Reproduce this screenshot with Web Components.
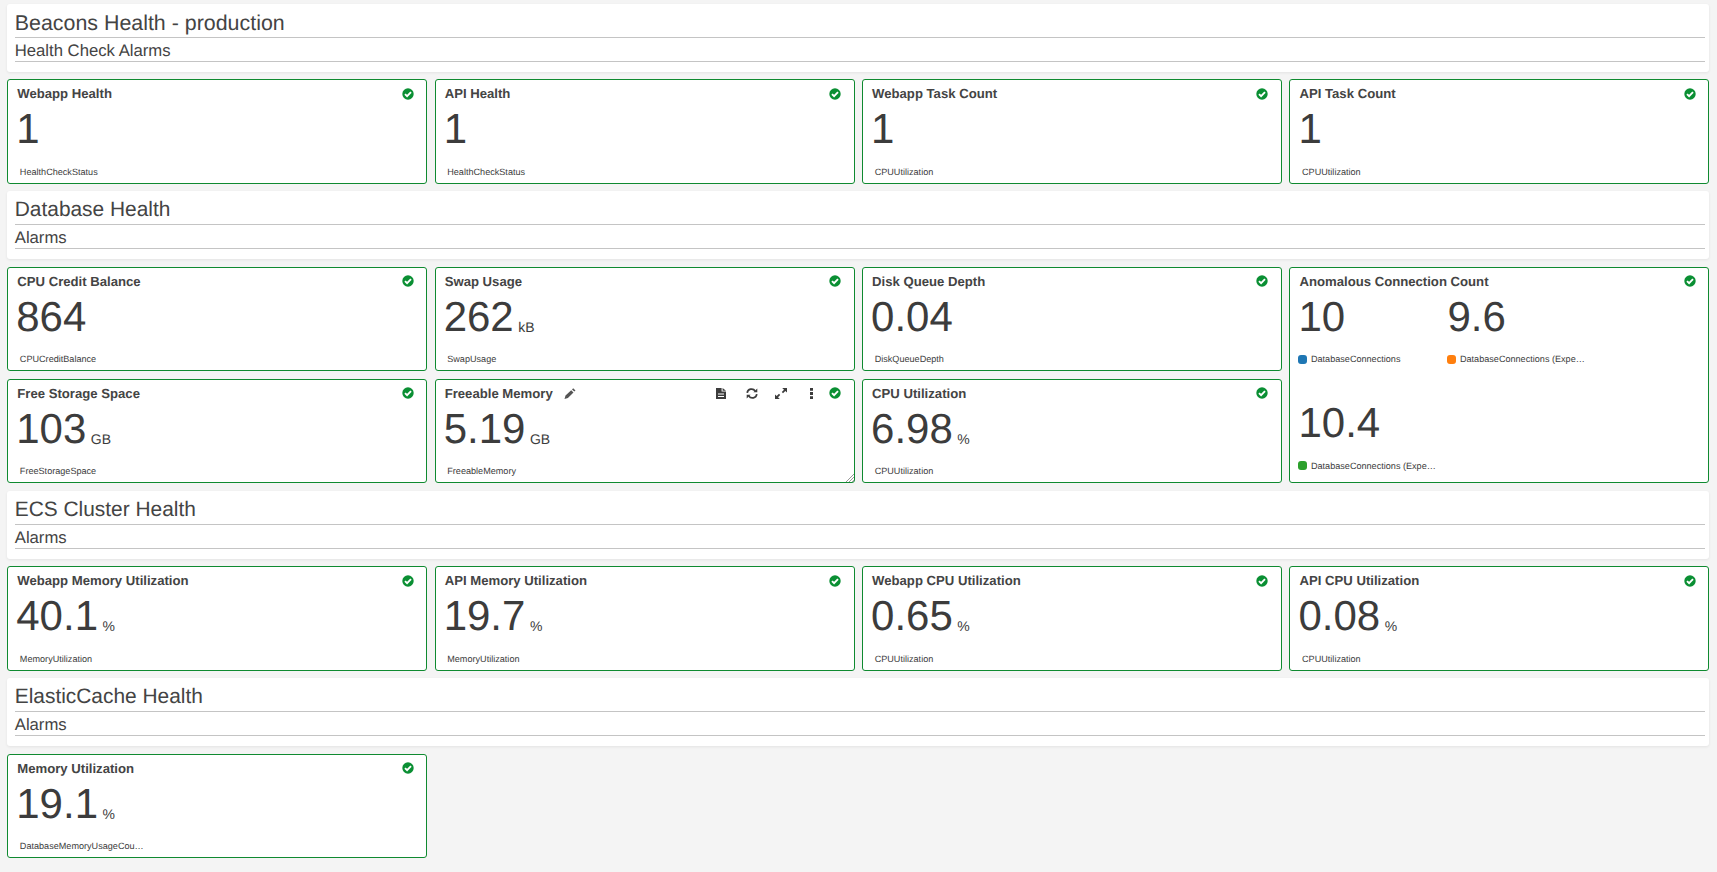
<!DOCTYPE html>
<html>
<head>
<meta charset="utf-8">
<title>Beacons Health - production</title>
<style>
    html, body { margin: 0; height: 100%; }
    body {
        background: #f4f4f4;
        color: #3c3c3c;
        font-family: "Liberation Sans", Arial, sans-serif;
        text-rendering: geometricPrecision;
    }
</style>
</head>
<body>
<health-dashboard>
    <text-panel main heading="Beacons Health - production" sub="Health Check Alarms"></text-panel>
    <metric-grid>
        <metric-card name="Webapp Health"><metric-value value="1" label="HealthCheckStatus"></metric-value></metric-card>
        <metric-card name="API Health"><metric-value value="1" label="HealthCheckStatus"></metric-value></metric-card>
        <metric-card name="Webapp Task Count"><metric-value value="1" label="CPUUtilization"></metric-value></metric-card>
        <metric-card name="API Task Count"><metric-value value="1" label="CPUUtilization"></metric-value></metric-card>
    </metric-grid>

    <text-panel heading="Database Health" sub="Alarms"></text-panel>
    <metric-grid>
        <metric-card name="CPU Credit Balance"><metric-value value="864" label="CPUCreditBalance"></metric-value></metric-card>
        <metric-card name="Swap Usage"><metric-value value="262" unit="kB" label="SwapUsage"></metric-value></metric-card>
        <metric-card name="Disk Queue Depth"><metric-value value="0.04" label="DiskQueueDepth"></metric-value></metric-card>
        <metric-card name="Anomalous Connection Count" tall>
            <metric-value value="10" label="DatabaseConnections" swatch="#1f77b4"></metric-value>
            <metric-value value="9.6" label="DatabaseConnections (Expe…" swatch="#ff7f0e"></metric-value>
            <metric-value value="10.4" label="DatabaseConnections (Expe…" swatch="#2ca02c"></metric-value>
        </metric-card>
        <metric-card name="Free Storage Space"><metric-value value="103" unit="GB" label="FreeStorageSpace"></metric-value></metric-card>
        <metric-card name="Freeable Memory" hovered><metric-value value="5.19" unit="GB" label="FreeableMemory"></metric-value></metric-card>
        <metric-card name="CPU Utilization"><metric-value value="6.98" unit="%" label="CPUUtilization"></metric-value></metric-card>
    </metric-grid>

    <text-panel heading="ECS Cluster Health" sub="Alarms"></text-panel>
    <metric-grid>
        <metric-card name="Webapp Memory Utilization"><metric-value value="40.1" unit="%" label="MemoryUtilization"></metric-value></metric-card>
        <metric-card name="API Memory Utilization"><metric-value value="19.7" unit="%" label="MemoryUtilization"></metric-value></metric-card>
        <metric-card name="Webapp CPU Utilization"><metric-value value="0.65" unit="%" label="CPUUtilization"></metric-value></metric-card>
        <metric-card name="API CPU Utilization"><metric-value value="0.08" unit="%" label="CPUUtilization"></metric-value></metric-card>
    </metric-grid>

    <text-panel heading="ElasticCache Health" sub="Alarms"></text-panel>
    <metric-grid>
        <metric-card name="Memory Utilization"><metric-value value="19.1" unit="%" label="DatabaseMemoryUsageCou…"></metric-value></metric-card>
    </metric-grid>
</health-dashboard>

<script>
class HealthDashboard extends HTMLElement {
    constructor() {
        super();
        this.attachShadow({ mode: "open" });
        this.shadowRoot.innerHTML = `
            <style>
                :host {
                    display: flex;
                    flex-direction: column;
                    gap: 7.6px;
                    padding: 4px 7.65px 0 7.25px;
                }
            </style>
            <slot></slot>
        `;
    }
}

class TextPanel extends HTMLElement {
    constructor() {
        super();
        this.attachShadow({ mode: "open" });
        this.shadowRoot.innerHTML = `
            <style>
                :host {
                    display: block;
                    height: 67.7px;
                    box-sizing: border-box;
                    padding: 0 4px 0 7.5px;
                    background: #fff;
                    border-radius: 3px;
                    box-shadow: 0 1px 3px rgba(0, 0, 0, 0.07);
                    color: #444;
                }
                h1, h2 {
                    margin: 0;
                    font-weight: 400;
                    border-bottom: 1px solid #c4c4c4;
                    white-space: nowrap;
                }
                h1 { font-size: 20.9px; line-height: 38px; height: 33px; }
                :host([main]) h1 { font-size: 21.4px; }
                h2 { font-size: 16.7px; line-height: 25px; height: 23px; }
            </style>
            <h1 id="heading"></h1>
            <h2 id="sub"></h2>
        `;
    }

    connectedCallback() {
        this.shadowRoot.querySelector("#heading").textContent = this.getAttribute("heading");
        this.shadowRoot.querySelector("#sub").textContent = this.getAttribute("sub");
    }
}

class MetricGrid extends HTMLElement {
    constructor() {
        super();
        this.attachShadow({ mode: "open" });
        this.shadowRoot.innerHTML = `
            <style>
                :host {
                    display: grid;
                    grid-template-columns: repeat(4, 1fr);
                    grid-auto-rows: 104.5px;
                    column-gap: 7.5px;
                    row-gap: 7.6px;
                }
            </style>
            <slot></slot>
        `;
    }
}

const ICONS = {
    page: `<svg width="10" height="11" viewBox="0 0 10 11"><path fill="#3c3c3c" fill-rule="evenodd" d="M0 0h5.6v3.6H10V11H0zM6.6 0 10 2.7H6.6zM2 5.6v1h6v-1zM2 7.9v1h6v-1z"/></svg>`,
    refresh: `<svg width="12" height="11" viewBox="0 0 12 11"><path fill="none" stroke="#3c3c3c" stroke-width="1.7" d="M1.2 4.9A4.4 4.4 0 0 1 9.2 3M10.8 6.1A4.4 4.4 0 0 1 2.8 8"/><path fill="#3c3c3c" d="M11.3.4v3.9H7.4zM.7 10.6V6.7h3.9z"/></svg>`,
    expand: `<svg width="12" height="11" viewBox="0 0 12 11"><path fill="#3c3c3c" d="M7.2 0H12v4.6L10.3 3 8 5.2 6.8 4l2.2-2.3zM4.8 11H0V6.4L1.7 8 4 5.8 5.2 7 3 9.3z"/></svg>`,
    dots: `<svg width="3" height="11" viewBox="0 0 3 11"><path fill="#3c3c3c" d="M0 0h3v2.8H0zM0 4.1h3v2.8H0zM0 8.2h3V11H0z"/></svg>`,
    pencil: `<svg width="12" height="11" viewBox="0 0 12 11"><path fill="#555" d="M9.2.2l2.3 2.2-1.2 1.2L8 1.4zM7.2 2.2l2.3 2.2-5.6 5.5-3.4 1 1-3.3z"/></svg>`,
    check: `<svg width="12" height="12" viewBox="0 0 12 12"><circle cx="6" cy="6" r="5.7" fill="#0a8f33"/><path fill="none" stroke="#fff" stroke-width="1.9" d="M3 6.1l2.1 2.1 3.9-4"/></svg>`
};

class MetricCard extends HTMLElement {
    constructor() {
        super();
        this.attachShadow({ mode: "open" });
        this.shadowRoot.innerHTML = `
            <style>
                :host {
                    display: flex;
                    flex-direction: column;
                    box-sizing: border-box;
                    min-width: 0;
                    position: relative;
                    background: #fff;
                    border: 1px solid #0f8a30;
                    border-radius: 3px;
                    padding: 0 9px;
                }
                :host([tall]) {
                    grid-column: 4;
                    grid-row: 1 / span 2;
                }
                header {
                    display: flex;
                    align-items: center;
                    height: 15px;
                    margin-top: 6px;
                    gap: 11px;
                }
                h3 {
                    margin: 0;
                    font-size: 13.15px;
                    font-weight: 700;
                    color: #444;
                    white-space: nowrap;
                }
                .tools {
                    margin-left: auto;
                    display: flex;
                    align-items: center;
                    height: 15px;
                    margin-right: 3.5px;
                }
                .tools span { display: flex; }
                .pencil { display: none; }
                .extra { display: none !important; }
                :host([hovered]) .pencil { display: flex; }
                :host([hovered]) .extra { display: flex !important; }
                :host([hovered]) .extra:nth-child(1) { margin-right: 19.5px; }
                :host([hovered]) .extra:nth-child(2) { margin-right: 17.5px; }
                :host([hovered]) .extra:nth-child(3) { margin-right: 23px; }
                :host([hovered]) .extra:nth-child(4) { margin-right: 16px; }
                .body {
                    display: grid;
                    grid-template-columns: repeat(2, 149px);
                    grid-auto-rows: 106.5px;
                    flex: 1;
                }
                .grip {
                    display: none;
                    position: absolute;
                    right: 0;
                    bottom: 0;
                }
                :host([hovered]) .grip { display: block; }
            </style>
            <header>
                <h3 id="name"></h3>
                <span class="pencil">${ICONS.pencil}</span>
                <div class="tools">
                    <span class="extra">${ICONS.page}</span>
                    <span class="extra">${ICONS.refresh}</span>
                    <span class="extra">${ICONS.expand}</span>
                    <span class="extra">${ICONS.dots}</span>
                    <span>${ICONS.check}</span>
                </div>
            </header>
            <div class="body"><slot></slot></div>
            <svg class="grip" width="8" height="8" viewBox="0 0 8 8"><path stroke="#999" stroke-width="1" d="M0 8 8 0M3 8l5-5M6 8l2-2"/></svg>
        `;
    }

    connectedCallback() {
        this.shadowRoot.querySelector("#name").textContent = this.getAttribute("name");
    }
}

class MetricValue extends HTMLElement {
    constructor() {
        super();
        this.attachShadow({ mode: "open" });
        this.shadowRoot.innerHTML = `
            <style>
                :host {
                    display: block;
                    min-width: 0;
                    color: #3c3c3c;
                }
                .reading {
                    display: flex;
                    align-items: baseline;
                    gap: 4.5px;
                    height: 48px;
                    margin-top: 4px;
                    margin-left: -1px;
                    line-height: 48px;
                }
                .number { font-size: 42px; }
                .unit { font-size: 14px; transform: translateY(1px); }
                .label {
                    display: flex;
                    align-items: center;
                    gap: 4px;
                    margin-top: 12.5px;
                    margin-left: 2.6px;
                    height: 12px;
                    font-size: 9.1px;
                    white-space: nowrap;
                }
                :host([swatch]) .label { margin-left: -1.5px; }
                .swatch {
                    display: none;
                    width: 9px;
                    height: 9px;
                    border-radius: 3px;
                }
                :host([swatch]) .swatch { display: block; }
            </style>
            <div class="reading"><span class="number" id="number"></span><span class="unit" id="unit"></span></div>
            <div class="label"><span class="swatch" id="swatch"></span><span id="label"></span></div>
        `;
    }

    connectedCallback() {
        const root = this.shadowRoot;
        root.querySelector("#number").textContent = this.getAttribute("value");
        root.querySelector("#unit").textContent = this.getAttribute("unit") || "";
        root.querySelector("#label").textContent = this.getAttribute("label");
        if (this.hasAttribute("swatch")) {
            root.querySelector("#swatch").style.background = this.getAttribute("swatch");
        }
    }
}

customElements.define("health-dashboard", HealthDashboard);
customElements.define("text-panel", TextPanel);
customElements.define("metric-grid", MetricGrid);
customElements.define("metric-card", MetricCard);
customElements.define("metric-value", MetricValue);
</script>
</body>
</html>
